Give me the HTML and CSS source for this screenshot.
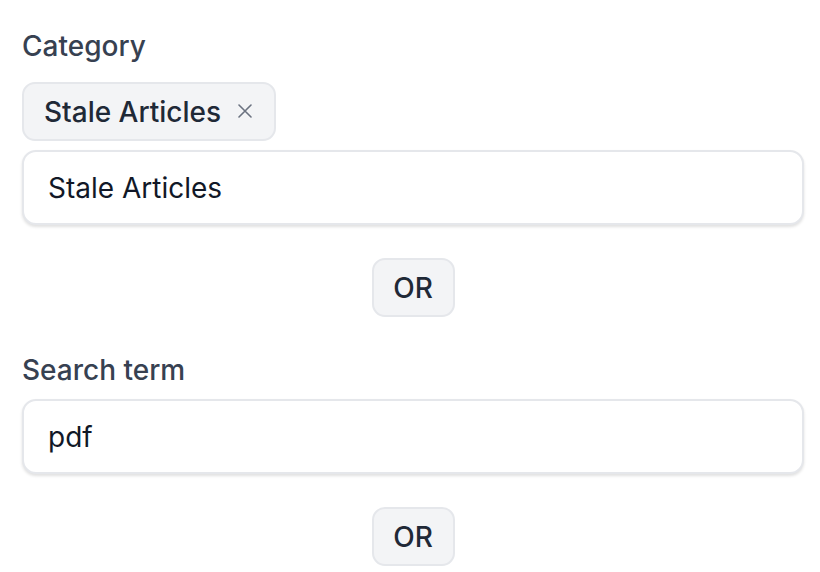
FILE: index.html
```html
<!DOCTYPE html>
<html lang="en">
<head>
<meta charset="utf-8">
<title>Filters</title>
<link rel="stylesheet" href="styles.css">
</head>
<body>
<form class="filters">
  <div class="field">
    <label class="field-label">Category</label>
    <div class="chips">
      <span class="chip">Stale Articles
        <svg class="chip-x" width="14" height="14" viewBox="0 0 14 14" aria-label="Remove">
          <path d="M1 1L13 13M13 1L1 13" stroke="currentColor" stroke-width="1.6" fill="none" stroke-linecap="round"/>
        </svg>
      </span>
    </div>
    <div class="input">Stale Articles</div>
  </div>
  <div class="divider"><span class="or">OR</span></div>
  <div class="field">
    <label class="field-label">Search term</label>
    <div class="input">pdf</div>
  </div>
  <div class="divider"><span class="or">OR</span></div>
</form>
</body>
</html>
```
FILE: styles.css
```css
* { box-sizing: border-box; }

body {
  margin: 0;
  padding: 26px 16px 0 22px;
  background: #ffffff;
  font-family: Inter, "Noto Sans", sans-serif;
  color: #1f2937;
}

.filters {
  display: flex;
  flex-direction: column;
}

.field {
  display: flex;
  flex-direction: column;
}

.field-label {
  font-size: 28px;
  line-height: 40px;
  font-weight: 500;
  color: #374151;
  margin-bottom: 9px;
}

.chips {
  display: flex;
  margin-top: 7px;
  margin-bottom: 9px;
}

.chip {
  display: inline-flex;
  align-items: center;
  gap: 17px;
  height: 59px;
  padding: 0 22px 0 20px;
  background: #f3f4f6;
  border: 2px solid #e5e7eb;
  border-radius: 13px;
  font-size: 28px;
  font-weight: 500;
  color: #1f2937;
}

.chip-x {
  display: block;
  color: #6b7280;
  margin-top: -2px;
}

.input {
  height: 75px;
  display: flex;
  align-items: center;
  padding: 0 24px;
  background: #ffffff;
  border: 2px solid #e5e7eb;
  border-radius: 14px;
  box-shadow: 0 2px 3px rgba(0, 0, 0, 0.12);
  font-size: 28px;
  color: #111827;
}

.divider {
  display: flex;
  justify-content: center;
  padding: 33px 0;
}

.or {
  display: inline-flex;
  align-items: center;
  justify-content: center;
  width: 83px;
  height: 59px;
  background: #f3f4f6;
  border: 2px solid #e5e7eb;
  border-radius: 13px;
  font-size: 28px;
  font-weight: 500;
  color: #1f2937;
}
```
